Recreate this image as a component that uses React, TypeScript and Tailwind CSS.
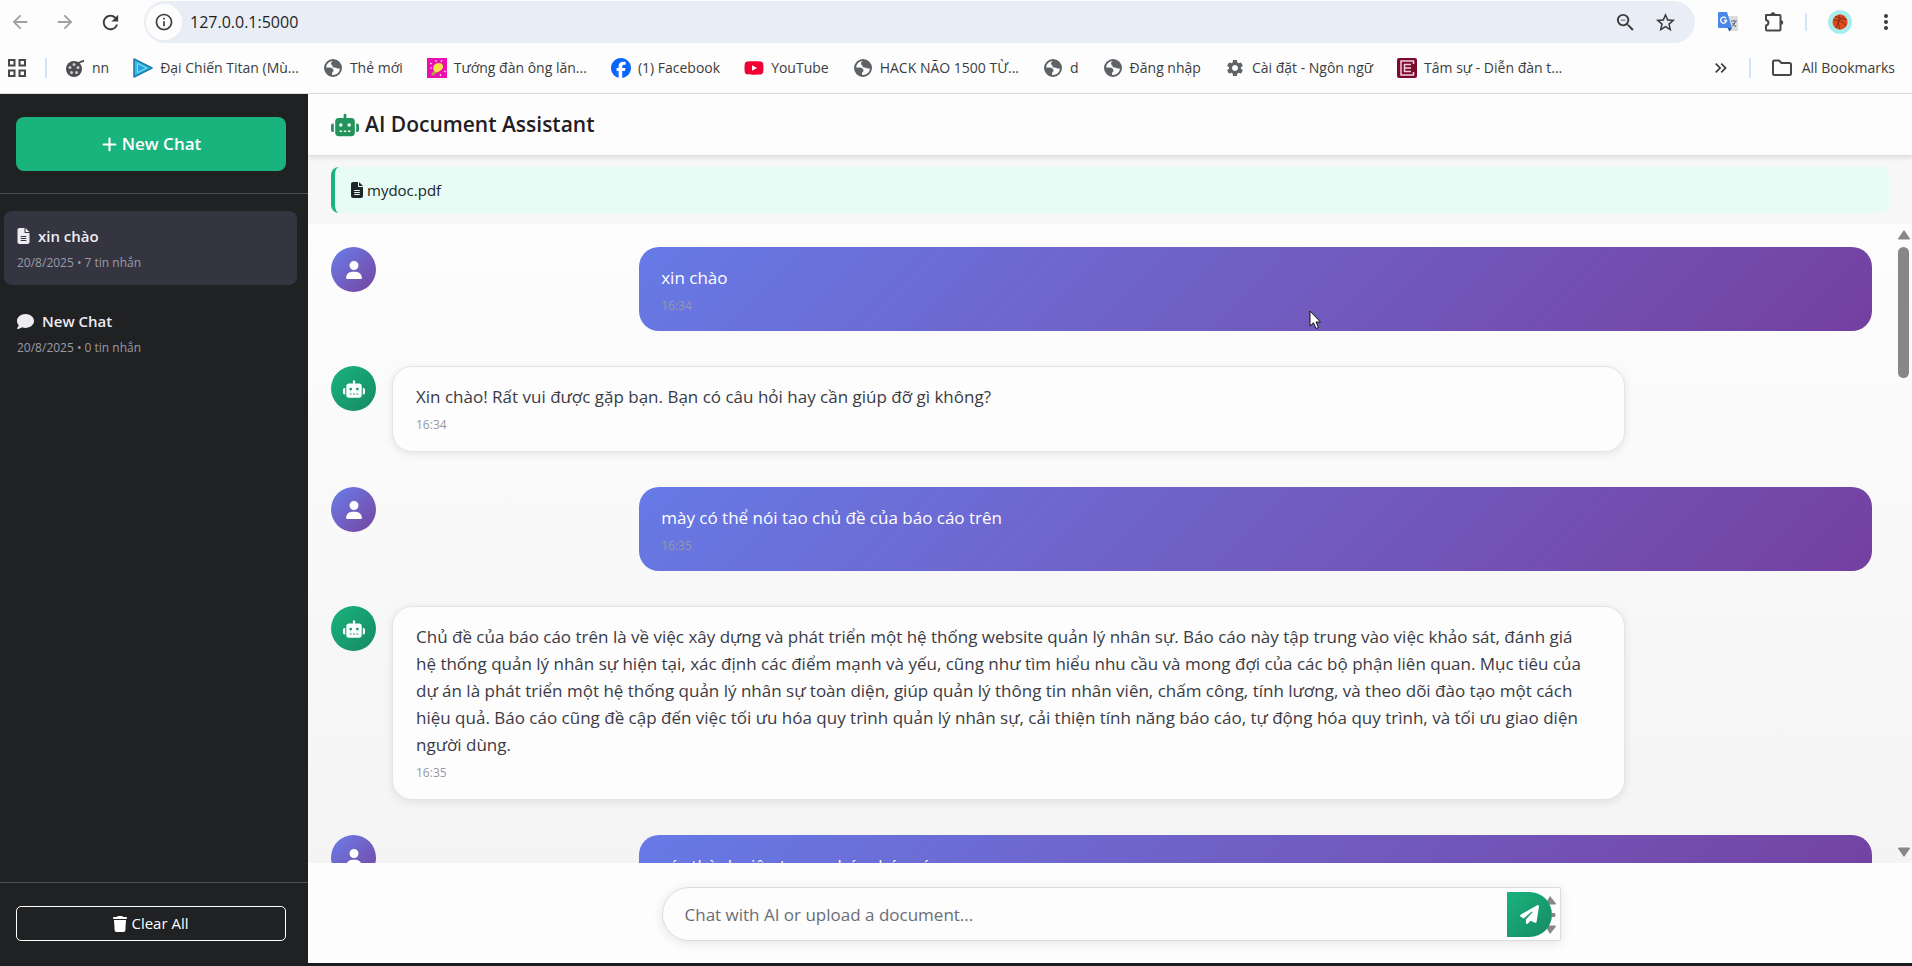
import type { ReactNode } from "react";
import {
  MdArrowBack,
  MdArrowForward,
  MdInfoOutline,
  MdKeyboardDoubleArrowRight,
  MdMoreVert,
  MdRefresh,
  MdSettings,
  MdStarBorder,
  MdZoomOut,
} from "react-icons/md";
import { FaComment, FaFacebook, FaFileLines, FaPaperPlane, FaPlus, FaRobot, FaTrash, FaUser, FaYoutube } from "react-icons/fa6";

function AppsIcon() {
  return (
    <svg viewBox="0 0 20 20" className="size-5 fill-none stroke-[#474747] stroke-2">
      <path d="M2 2h5.5v5.5H2zM12.5 2H18v5.5h-5.5zM2 12.5h5.5V18H2zM12.5 12.5H18V18h-5.5z" />
    </svg>
  );
}

function ReelIcon() {
  return (
    <svg viewBox="0 0 20 20" className="size-5">
      <circle cx="9" cy="11" r="8" fill="#4b4d52" />
      <path d="M12 5c3 0 4-2 7-2" fill="none" stroke="#4b4d52" strokeWidth="1.800" />
      <g fill="#c9cace">
        <circle cx="9" cy="6.500" r="1.500" />
        <circle cx="13" cy="9.500" r="1.500" />
        <circle cx="11.500" cy="14.500" r="1.500" />
        <circle cx="6.500" cy="14.500" r="1.500" />
        <circle cx="5" cy="9.500" r="1.500" />
      </g>
    </svg>
  );
}

function PlayIcon() {
  return (
    <svg viewBox="0 0 20 20" className="size-5">
      <path d="M1 1l18 9L1 19z" fill="#35b9e8" stroke="#1c7fa8" strokeWidth="1.6" strokeLinejoin="round" />
      <path d="M4.500 5.500l9 4.500-9 4.500z" fill="#25a5dc" stroke="#8fdcf2" strokeWidth="1" />
    </svg>
  );
}

function GlobeIcon() {
  return (
    <svg viewBox="0 0 20 20" className="size-5">
      <circle cx="10" cy="10" r="8" fill="#fdfdfd" stroke="#5f6368" strokeWidth="2" />
      <path d="M11 2c-1 1-3 1.500-3 3.500 0 1.500 1.500 1.500 1.500 2.500s1 1.500 2.500 1.500c1 0 1.500 1 3 1h3C18.500 6 15.500 2 11 2z" fill="#5f6368" />
      <path d="M2 9.500h4.500c2 0 4 1 4 3 0 1.500-1.500 1.500-1.500 3V18C5 17.500 1.500 14 2 9.500z" fill="#5f6368" />
    </svg>
  );
}

function BulbIcon() {
  return (
    <svg viewBox="0 0 20 20" className="size-5">
      <path fill="#ea0fae" d="M0 0h20v20H0z" />
      <path d="M3 5l2 1M3 10h2M9 2v2M15 2l-1 2M17 13l2 1M13 16l1 2" stroke="#fbd0ef" strokeWidth="1.2" />
      <path d="M7 13c-2-4 0-8 5-8 4 0 5 4 3 6-2 3-4 2-6 4z" fill="#f4e04a" />
      <path d="M4 16l3-3 2 2-3 3z" fill="#b3a23a" />
    </svg>
  );
}

function ForumIcon() {
  return (
    <svg viewBox="0 0 20 20" className="size-5">
      <rect width="20" height="20" rx="2" fill="#7c0a2c" />
      <path d="M16.500 6V3H4v14h12.500v-3M14 6.500H7.500v7H14M7.500 10H14" fill="none" stroke="#f0d3dc" strokeWidth="1.500" />
    </svg>
  );
}

function FolderIcon() {
  return (
    <svg viewBox="0 0 22 20" className="h-5 w-[22px]">
      <path d="M2 4a1.500 1.500 0 011.500-1.500H8l2.500 2.500h8A1.500 1.500 0 0120 6.500v9a1.500 1.500 0 01-1.500 1.500h-15A1.500 1.500 0 012 15.500z" fill="none" stroke="#474747" strokeWidth="2" strokeLinejoin="round" />
    </svg>
  );
}

function ExtensionIcon() {
  return (
    <svg viewBox="0 0 22 22" className="size-[22px]">
      <path
        d="M3 4h13.500a1 1 0 011 1v13.500a1 1 0 01-1 1H4a1 1 0 01-1-1v-4c3-.5 3.500-4.500 0-5.500z"
        fill="none"
        stroke="#474747"
        strokeWidth="2"
        strokeLinejoin="round"
      />
      <path d="M7.500 4a2.500 2.700 0 015 0zM17.500 9a2.700 2.500 0 010 5z" fill="#474747" />
    </svg>
  );
}

function TranslateIcon() {
  return (
    <svg viewBox="0 0 22 22" className="size-[22px]">
      <path d="M9 5h11a1 1 0 011 1v13a1 1 0 01-1 1h-8z" fill="#dcdcdc" />
      <path d="M2 1h8l5 16H2a1 1 0 01-1-1V2a1 1 0 011-1z" fill="#4a86e8" />
      <path d="M10.500 17H15l-2.500 3.500z" fill="#2757b5" />
      <path d="M9 7.300A3 3 0 109.600 9.500H7" fill="none" stroke="#fff" strokeWidth="1.300" />
      <path d="M14 10h6M17 9v1M18.500 10c-.5 2-2 4-3 5M15.500 12c1 2 2 2.500 3.500 3.500" fill="none" stroke="#6b7280" strokeWidth="1.100" />
    </svg>
  );
}

function BallIcon() {
  return (
    <svg viewBox="0 0 24 24" className="size-6">
      <circle cx="12" cy="12" r="12" fill="#a8ecec" />
      <circle cx="12" cy="12" r="7.500" fill="#e2491d" />
      <path d="M5 10c5 0 10 1 13 6M12 4.500c-2 5-2 10 0 15M7 6.500c4 1 8 3 12 3M8 18c1-5 4-9 8-12" fill="none" stroke="#7c2a12" strokeWidth="0.900" />
    </svg>
  );
}

type Bookmark = { label: string; icon: ReactNode };

const bookmarks: Bookmark[] = [
  { label: "nn", icon: <ReelIcon /> },
  { label: "Đại Chiến Titan (Mù...", icon: <PlayIcon /> },
  { label: "Thẻ mới", icon: <GlobeIcon /> },
  { label: "Tướng đàn ông lăn...", icon: <BulbIcon /> },
  { label: "(1) Facebook", icon: <FaFacebook className="size-5 text-[#0866ff]" /> },
  { label: "YouTube", icon: <FaYoutube className="size-5 text-[#f00033]" /> },
  { label: "HACK NÃO 1500 TỪ...", icon: <GlobeIcon /> },
  { label: "d", icon: <GlobeIcon /> },
  { label: "Đăng nhập", icon: <GlobeIcon /> },
  { label: "Cài đặt - Ngôn ngữ", icon: <MdSettings className="size-5 text-[#5f6368]" /> },
  { label: "Tâm sự - Diễn đàn t...", icon: <ForumIcon /> },
];

function BrowserBar() {
  return (
    <header className="shrink-0 border-b border-[#dcdce0] bg-[#fdfdfd] text-[#3c3c3c]">
      <div className="flex h-11 items-center">
        <div className="flex w-36 shrink-0 items-center gap-[23px] pl-[9px]">
          <button aria-label="Back" className="text-[#a0a0a0]"><MdArrowBack className="size-[22px]" /></button>
          <button aria-label="Forward" className="text-[#a0a0a0]"><MdArrowForward className="size-[22px]" /></button>
          <button aria-label="Reload"><MdRefresh className="size-[23px]" /></button>
        </div>
        <div className="flex h-[42px] flex-1 items-center rounded-full bg-[#e9eef6] pr-[18px] pl-0.5">
          <button aria-label="Site information" className="flex size-9 items-center justify-center rounded-full bg-[#fdfdfd]">
            <MdInfoOutline className="size-5" />
          </button>
          <input aria-label="Address" defaultValue="127.0.0.1:5000" className="ml-2 min-w-0 flex-1 bg-transparent text-base text-[#1f1f1f] outline-none" />
          <button aria-label="Zoom"><MdZoomOut className="size-[23px]" /></button>
          <button aria-label="Bookmark this tab" className="ml-[17px]"><MdStarBorder className="size-[23px]" /></button>
        </div>
        <div className="flex w-[217px] shrink-0 items-center pl-[22px]">
          <button aria-label="Translate"><TranslateIcon /></button>
          <button aria-label="Extensions" className="ml-6"><ExtensionIcon /></button>
          <span className="ml-5 h-[18px] w-0.5 bg-[#d3e3fd]" />
          <button aria-label="Profile" className="ml-[21px]"><BallIcon /></button>
          <button aria-label="Menu" className="ml-[22px]"><MdMoreVert className="size-6" /></button>
        </div>
      </div>
      <nav aria-label="Bookmarks" className="flex h-[49px] items-center pb-px pl-[7px] text-sm whitespace-nowrap">
        <button aria-label="Apps"><AppsIcon /></button>
        <span className="ml-[18px] h-5 w-0.5 bg-[#d3e3fd]" />
        <div className="ml-[18px] flex items-center gap-6">
          {bookmarks.map((b) => (
            <a key={b.label} href="#" className="flex items-center gap-[7px]">
              {b.icon}
              {b.label}
            </a>
          ))}
        </div>
        <div className="ml-auto flex items-center pr-[17px]">
          <button aria-label="More bookmarks"><MdKeyboardDoubleArrowRight className="size-5" /></button>
          <span className="ml-[18px] h-5 w-0.5 bg-[#d3e3fd]" />
          <a href="#" className="ml-5 flex items-center gap-[9px]">
            <FolderIcon />
            All Bookmarks
          </a>
        </div>
      </nav>
    </header>
  );
}

function ChatItem({ icon, title, meta, active }: { icon: ReactNode; title: string; meta: string; active?: boolean }) {
  return (
    <a href="#" className={`block rounded-lg px-[13px] py-3 ${active ? "bg-[#343541]" : ""}`}>
      <span className="flex h-[26px] items-center gap-2 text-[15px] font-semibold text-[#ececf1]">
        {icon}
        {title}
      </span>
      <span className="mt-1 block h-5 text-xs leading-5 text-[#9a9ba5]">{meta}</span>
    </a>
  );
}

function Sidebar() {
  return (
    <aside className="flex w-[308px] shrink-0 flex-col bg-[#202123]">
      <div className="border-b border-[#4d4d57] pt-[23px] pr-[22px] pb-[22px] pl-4">
        <button className="flex h-[54px] w-full items-center justify-center gap-1 rounded-lg bg-[#19b37d] text-[17px] font-semibold text-white">
          <FaPlus className="size-[17px]" />
          New Chat
        </button>
      </div>
      <nav aria-label="Chats" className="flex flex-1 flex-col gap-[11px] pt-[17px] pr-[11px] pl-1">
        <ChatItem active icon={<FaFileLines className="h-4 w-[13px]" />} title="xin chào" meta="20/8/2025 • 7 tin nhắn" />
        <ChatItem icon={<FaComment className="size-[17px]" />} title="New Chat" meta="20/8/2025 • 0 tin nhắn" />
      </nav>
      <div className="border-t border-[#4d4d57] pt-[23px] pr-[22px] pb-[22px] pl-4">
        <button className="flex h-[35px] w-full items-center justify-center gap-1 rounded-[5px] border border-white text-[15px] text-white">
          <FaTrash className="h-4 w-3.5" />
          Clear All
        </button>
      </div>
    </aside>
  );
}

type Message = { from: "user" | "bot"; text: string; time: string };

const messages: Message[] = [
  { from: "user", text: "xin chào", time: "16:34" },
  { from: "bot", text: "Xin chào! Rất vui được gặp bạn. Bạn có câu hỏi hay cần giúp đỡ gì không?", time: "16:34" },
  { from: "user", text: "mày có thể nói tao chủ đề của báo cáo trên", time: "16:35" },
  {
    from: "bot",
    text: "Chủ đề của báo cáo trên là về việc xây dựng và phát triển một hệ thống website quản lý nhân sự. Báo cáo này tập trung vào việc khảo sát, đánh giá hệ thống quản lý nhân sự hiện tại, xác định các điểm mạnh và yếu, cũng như tìm hiểu nhu cầu và mong đợi của các bộ phận liên quan. Mục tiêu của dự án là phát triển một hệ thống quản lý nhân sự toàn diện, giúp quản lý thông tin nhân viên, chấm công, tính lương, và theo dõi đào tạo một cách hiệu quả. Báo cáo cũng đề cập đến việc tối ưu hóa quy trình quản lý nhân sự, cải thiện tính năng báo cáo, tự động hóa quy trình, và tối ưu giao diện người dùng.",
    time: "16:35",
  },
  { from: "user", text: "các thành viên trong nhóm báo cáo", time: "16:35" },
];

function MessageRow({ message }: { message: Message }) {
  const user = message.from === "user";
  return (
    <article className={`flex items-start ${user ? "justify-between" : "gap-4"}`}>
      <span
        className={`flex size-[45px] shrink-0 items-center justify-center rounded-full text-white ${
          user ? "bg-linear-135 from-[#667eea] to-[#7343a0]" : "bg-linear-135 from-[#19b37d] to-[#168a63]"
        }`}
      >
        {user ? <FaUser className="size-[18px]" /> : <FaRobot className="size-[22px]" />}
      </span>
      <div
        className={`w-4/5 rounded-[20px] pr-[29px] ${
          user
            ? "bg-linear-135 from-[#667ae6] to-[#7340a0] pt-[17px] pb-4 pl-[22px] text-white"
            : "border border-[#e4e4e9] bg-[#fdfdfd] pt-4 pb-[17px] pl-[23px] text-[#3a3b45] shadow-[0_2px_8px_rgba(0,0,0,0.09)]"
        }`}
      >
        <p className="text-[17px] leading-[27px]">{message.text}</p>
        <time className="mt-1.5 block text-xs leading-[18px] text-[#9698a6]">{message.time}</time>
      </div>
    </article>
  );
}

function ScrollBar() {
  return (
    <div aria-hidden="true" className="flex w-[17px] shrink-0 flex-col items-center py-1.5">
      <svg viewBox="0 0 12 10" className="h-2.5 w-3 fill-[#878787]"><path d="M6 0l6 8.500q0 1-1 1H1q-1 0-1-1z" /></svg>
      <span className="mt-[7px] h-[131px] w-[11px] rounded-full bg-[#878787]" />
      <svg viewBox="0 0 12 10" className="mt-auto h-2.5 w-3 fill-[#878787]"><path d="M6 10l6-8.500q0-1-1-1H1q-1 0-1 1z" /></svg>
    </div>
  );
}

export default function App() {
  return (
    <div className="flex h-screen flex-col overflow-hidden border-b-[3px] border-[#1b1c22] bg-[#fdfdfd] font-['Open_Sans','Noto_Sans',sans-serif]">
      <BrowserBar />
      <div className="flex min-h-0 flex-1">
        <Sidebar />
        <main className="flex min-w-0 flex-1 flex-col">
          <div className="z-10 flex h-[62px] shrink-0 items-center gap-1.5 border-b border-[#e0e0e4] bg-[#fdfdfd] px-[23px] shadow-[0_2px_4px_rgba(0,0,0,0.1)]">
            <FaRobot className="size-7 text-[#22935b]" />
            <h1 className="text-[21px] font-semibold text-[#1f2024]">AI Document Assistant</h1>
          </div>
          <div className="shrink-0 bg-[#f7f7f8] px-[23px] py-[11px]">
            <div className="flex h-[46px] items-center gap-1 rounded-lg border-l-4 border-[#19b37d] bg-[#e6fcf5] pl-4 text-[15px] text-[#212529]">
              <FaFileLines className="h-4 w-3" />
              mydoc.pdf
            </div>
          </div>
          <section aria-label="Messages" className="relative flex min-h-0 flex-1 overflow-hidden bg-linear-to-b from-[#fdfdfd] to-[#f4f4f5]">
            <div className="flex min-w-0 flex-1 flex-col gap-[35px] overflow-hidden px-[23px] pt-[23px]">
              {messages.map((m, i) => (
                <MessageRow key={i} message={m} />
              ))}
            </div>
            <ScrollBar />
            <svg viewBox="0 0 12 20" className="absolute top-[86px] left-[1001px] h-5 w-3" aria-hidden="true">
              <path d="M1 1v15l3.500-3.200L7 18.500l2.500-1L7 12h4.500z" fill="#fff" stroke="#111" strokeWidth="1" />
            </svg>
          </section>
          <form className="flex shrink-0 justify-center pt-6 pr-6 pb-[22px] pl-[26px]" onSubmit={(e) => e.preventDefault()}>
            <div className="flex h-[54px] w-full max-w-[899px] items-center rounded-l-[27px] border border-[#dcdce0] pr-2 pl-[22px] shadow-[0_2px_12px_rgba(0,0,0,0.1)]">
              <textarea
                aria-label="Message"
                rows={1}
                placeholder="Chat with AI or upload a document..."
                className="h-8 min-w-0 flex-1 resize-none overflow-hidden bg-transparent pt-0.5 text-[17px] leading-[30px] outline-none placeholder:text-[#6b6d75]"
              />
              <div className="relative size-[45px]">
                <svg viewBox="0 0 12 38" className="absolute top-1 -right-1 h-[38px] w-3 fill-[#878787]" aria-hidden="true">
                  <path d="M6 0l6 7.500q0 1-1 1H1zM6 38l6-7.500q0-1-1-1H1zM8 17h3q1 2 0 4H8z" />
                </svg>
                <button aria-label="Send" className="relative flex size-[45px] items-center justify-center rounded-r-full bg-linear-135 from-[#19b37d] to-[#168a63] text-white">
                  <FaPaperPlane className="size-[19px]" />
                </button>
              </div>
            </div>
          </form>
        </main>
      </div>
    </div>
  );
}
